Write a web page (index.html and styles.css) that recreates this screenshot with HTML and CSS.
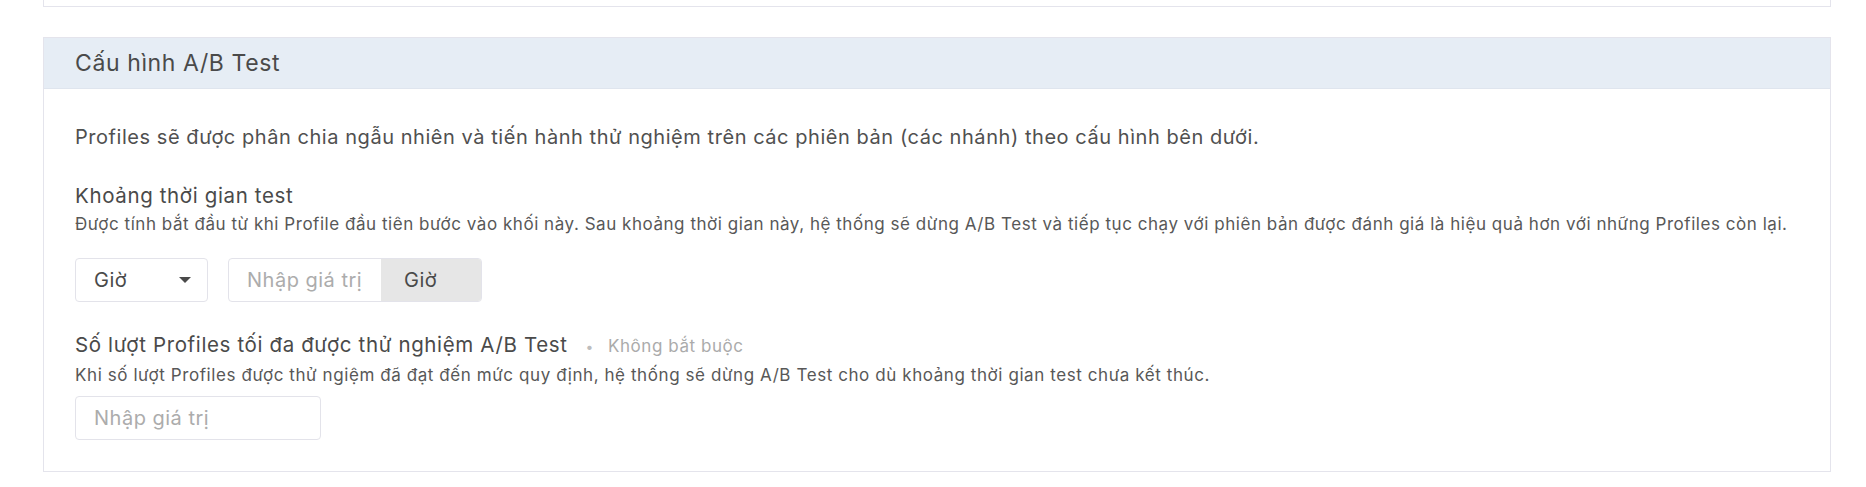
FILE: index.html
```html
<!DOCTYPE html>
<html lang="vi">
<head>
<meta charset="utf-8">
<title>Cấu hình A/B Test</title>
<link rel="stylesheet" href="styles.css">
</head>
<body>
<div class="prev-card"></div>
<section class="card">
  <header class="card-header">
    <h2 class="card-title">Cấu hình A/B Test</h2>
  </header>
  <div class="card-body">
    <p class="intro">Profiles sẽ được phân chia ngẫu nhiên và tiến hành thử nghiệm trên các phiên bản (các nhánh) theo cấu hình bên dưới.</p>

    <div class="field">
      <div class="field-label">Khoảng thời gian test</div>
      <div class="field-desc">Được tính bắt đầu từ khi Profile đầu tiên bước vào khối này. Sau khoảng thời gian này, hệ thống sẽ dừng A/B Test và tiếp tục chạy với phiên bản được đánh giá là hiệu quả hơn với những Profiles còn lại.</div>
      <div class="controls">
        <div class="select">
          <span class="select-value">Giờ</span>
          <span class="caret"></span>
        </div>
        <div class="input-group">
          <span class="input input-in-group"><span class="placeholder">Nhập giá trị</span></span>
          <span class="addon">Giờ</span>
        </div>
      </div>
    </div>

    <div class="field field-second">
      <div class="field-label">Số lượt Profiles tối đa được thử nghiệm A/B Test<span class="dot">•</span><span class="optional">Không bắt buộc</span></div>
      <div class="field-desc field-desc-second">Khi số lượt Profiles được thử ngiệm đã đạt đến mức quy định, hệ thống sẽ dừng A/B Test cho dù khoảng thời gian test chưa kết thúc.</div>
      <div class="controls controls-second">
        <span class="input input-wide"><span class="placeholder">Nhập giá trị</span></span>
      </div>
    </div>
  </div>
</section>
</body>
</html>
```

FILE: styles.css
```css
* { box-sizing: border-box; }

html, body {
  margin: 0;
  padding: 0;
  background: #ffffff;
}

body {
  font-family: Inter, "Noto Sans", "DejaVu Sans", sans-serif;
  color: #4f4f4f;
}

.prev-card {
  margin-left: 43px;
  width: 1788px;
  height: 7px;
  border: 1px solid #e4e4ec;
  border-top: none;
}

.card {
  margin-top: 30px;
  margin-left: 43px;
  width: 1788px;
  border: 1px solid #e4e4ec;
}

.card-header {
  height: 51px;
  background: #e6edf5;
  border-bottom: 1px solid #dfe5ee;
  display: flex;
  align-items: center;
  padding-left: 31px;
}

.card-title {
  margin: 0;
  font-size: 23px;
  font-weight: 400;
  letter-spacing: 0.6px;
  color: #4a4a4a;
  line-height: 1;
}

.card-body {
  padding: 34px 31px 31px 31px;
}

.intro {
  margin: 0;
  font-size: 20px;
  letter-spacing: 0.55px;
  line-height: 28px;
  color: #505050;
}

.field {
  margin-top: 33px;
}

.field-second {
  margin-top: 31px;
}

.field-label {
  font-size: 20.5px;
  letter-spacing: 0.63px;
  line-height: 24px;
  margin-bottom: 6px;
  color: #4a4a4a;
  display: flex;
  align-items: baseline;
}

.dot {
  color: #bdbdbd;
  font-size: 14px;
  margin-left: 18px;
  margin-right: 14px;
}

.optional {
  font-size: 17px;
  letter-spacing: 0.55px;
  color: #ababab;
}

.field-desc {
  font-size: 17px;
  letter-spacing: 0.54px;
  line-height: 20px;
  color: #585858;
}

.field-desc-second {
  letter-spacing: 0.58px;
}

.controls {
  margin-top: 24px;
  display: flex;
  gap: 20px;
}

.controls-second {
  margin-top: 11px;
}

.select {
  width: 133px;
  height: 44px;
  border: 1px solid #e3e3ea;
  border-radius: 4px;
  display: flex;
  align-items: center;
  justify-content: space-between;
  padding: 0 16px 0 18px;
  font-size: 20px;
  letter-spacing: 0.5px;
  color: #4a4a4a;
}

.caret {
  width: 0;
  height: 0;
  border-left: 6px solid transparent;
  border-right: 6px solid transparent;
  border-top: 6px solid #4a4a4a;
}

.input-group {
  display: flex;
  height: 44px;
  width: 254px;
  border: 1px solid #e3e3ea;
  border-radius: 4px;
  overflow: hidden;
}

.input {
  display: flex;
  align-items: center;
  height: 44px;
  font-size: 20px;
  letter-spacing: 0.5px;
}

.input-in-group {
  width: 152px;
  height: 42px;
  padding-left: 18px;
}

.addon {
  flex: 1;
  display: flex;
  align-items: center;
  padding-left: 23px;
  background: #e6e6e6;
  font-size: 20px;
  letter-spacing: 0.5px;
  color: #4a4a4a;
}

.input-wide {
  width: 246px;
  border: 1px solid #e3e3ea;
  border-radius: 4px;
  padding-left: 18px;
}

.placeholder {
  color: #acacac;
}
```
